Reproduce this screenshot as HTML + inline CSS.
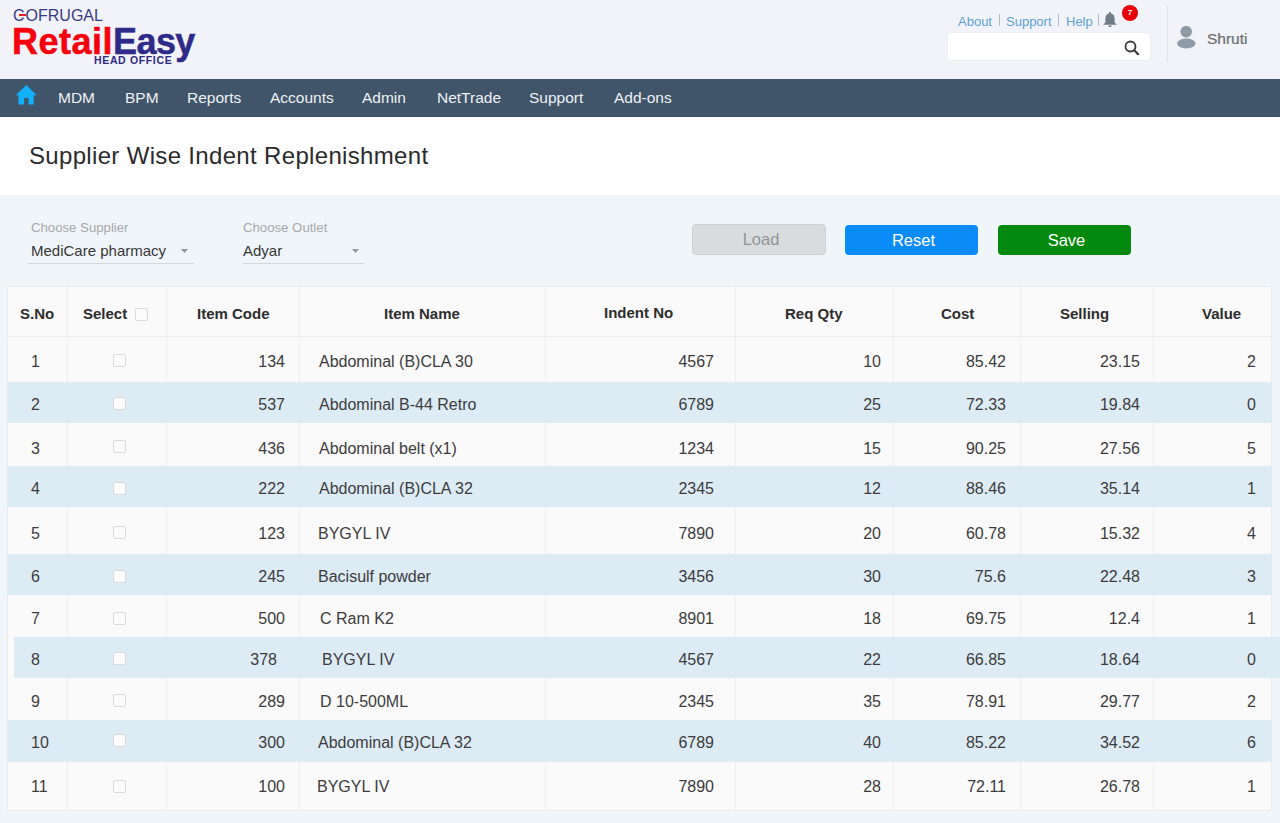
<!DOCTYPE html><html><head><meta charset="utf-8"><style>
*{margin:0;padding:0;box-sizing:border-box}
html,body{width:1280px;height:823px;overflow:hidden;background:#f0f5f9;font-family:"Liberation Sans",sans-serif;position:relative}
.a{position:absolute;white-space:nowrap}
#hdr{position:absolute;left:0;top:0;width:1280px;height:79px;background:#f2f3f8}
#nav{position:absolute;left:0;top:79px;width:1280px;height:38px;background:#40556a}
.nv{position:absolute;top:89px;color:#eef1f4;font-size:15.5px;line-height:18px}
#title{position:absolute;left:0;top:117px;width:1280px;height:78px;background:#fff}
.lbl{color:#a6a8aa;font-size:13.2px;line-height:15px}
.val{color:#373737;font-size:15px;line-height:17px}
.ul{position:absolute;height:1px;background:#d3d7dc}
.btn{position:absolute;top:224px;height:31px;border-radius:4px;text-align:center;line-height:31px;font-size:16.5px;padding-left:4px}
.row{position:absolute;left:7px;width:1264px}
.cell{position:absolute;font-size:16px;line-height:18px;color:#3c3c3c}
.vl{position:absolute;width:1px;background:#eeeeee}
.hl{position:absolute;height:1px;background:#eeeeee}
.cb{position:absolute;width:13px;height:13px;border:1px solid #d9dadb;border-radius:2px;background:#fbfbfb}
.th{position:absolute;top:305px;font-size:15px;line-height:17px;font-weight:bold;color:#2d2d2d}
</style></head><body>
<div id="hdr"></div>
<div class="a" style="left:13px;top:7px;font-size:16px;line-height:18px;color:#363a86;letter-spacing:0px"><span style="margin-right:1px">C</span>OFRUGAL</div>
<div class="a" style="left:19px;top:14px;width:7px;height:2px;background:#e3202e"></div>
<div class="a" style="left:12px;top:21px;font-size:36px;line-height:41px;font-weight:bold;letter-spacing:0px;-webkit-text-stroke:0.5px"><span style="color:#f5000c;letter-spacing:0.5px">Retail</span><span style="color:#2f2a87;letter-spacing:-0.6px">Easy</span></div>
<div class="a" style="left:94px;top:54px;font-size:10.5px;line-height:12px;font-weight:bold;color:#2f2a87;letter-spacing:0.65px">HEAD OFFICE</div>
<div class="a" style="left:958px;top:14px;font-size:13px;line-height:15px;color:#5b9fd6">About</div>
<div class="a" style="left:1006px;top:14px;font-size:13px;line-height:15px;color:#5b9fd6">Support</div>
<div class="a" style="left:1066px;top:14px;font-size:13px;line-height:15px;color:#5b9fd6">Help</div>
<div class="a" style="left:999px;top:14px;width:1px;height:12px;background:#b5b8bc"></div>
<div class="a" style="left:1058px;top:14px;width:1px;height:12px;background:#b5b8bc"></div>
<div class="a" style="left:1098px;top:14px;width:1px;height:12px;background:#b5b8bc"></div>
<svg class="a" style="left:1102px;top:11px" width="16" height="17" viewBox="0 0 16 17"><path d="M8 1c.7 0 1.1.5 1.1 1.1v.3C11.6 3 12.6 5 12.6 7.5v3.2c0 .9.6 1.6 1.9 2.3v.8H1.5v-.8c1.3-.7 1.9-1.4 1.9-2.3V7.5C3.4 5 4.4 3 6.9 2.4v-.3C6.9 1.5 7.3 1 8 1z M6.3 14.4h3.4c0 .9-.8 1.6-1.7 1.6s-1.7-.7-1.7-1.6z" fill="#6f7c88"/></svg>
<div class="a" style="left:1122px;top:5px;width:16px;height:16px;border-radius:50%;background:#e8000b;color:#fff;font-size:8px;font-weight:bold;line-height:15px;text-align:center">7</div>
<div class="a" style="left:947px;top:32px;width:204px;height:29px;background:#fff;border-radius:4px;border:1px solid #eceef2"></div>
<svg class="a" style="left:1124px;top:40px" width="16" height="15" viewBox="0 0 16 15"><circle cx="6.5" cy="6.5" r="5" fill="none" stroke="#3a3a3a" stroke-width="1.8"/><path d="M10.2 10.2l4 4" stroke="#3a3a3a" stroke-width="2.2" stroke-linecap="round"/></svg>
<div class="a" style="left:1167px;top:5px;width:1px;height:57px;background:#e3e5ea"></div>
<svg class="a" style="left:1176px;top:25px" width="21" height="24" viewBox="0 0 21 24"><circle cx="10.2" cy="6.6" r="5.8" fill="#8e9aa5"/><ellipse cx="10.3" cy="18.5" rx="9.2" ry="4.9" fill="#8e9aa5"/></svg>
<div class="a" style="left:1207px;top:30px;font-size:15.5px;line-height:17px;color:#6a6c70;-webkit-text-stroke:0.2px #6a6c70">Shruti</div>
<div id="nav"></div>
<svg class="a" style="left:15px;top:85px" width="23" height="20" viewBox="0 0 23 20"><path d="M11.3 0L0.8 10.2H3.5V19.5H9.1V12.9H13.6V19.5H18.7V10.2H21.8Z" fill="#12b0f8"/></svg>
<div class="a nv" style="left:58px">MDM</div>
<div class="a nv" style="left:125px">BPM</div>
<div class="a nv" style="left:187px">Reports</div>
<div class="a nv" style="left:270px">Accounts</div>
<div class="a nv" style="left:362px">Admin</div>
<div class="a nv" style="left:437px">NetTrade</div>
<div class="a nv" style="left:529px">Support</div>
<div class="a nv" style="left:614px">Add-ons</div>
<div id="title"></div>
<div class="a" style="left:29px;top:143px;font-size:24px;line-height:26px;color:#2b2b2b;letter-spacing:0.33px">Supplier Wise Indent Replenishment</div>
<div class="a lbl" style="left:31px;top:220px">Choose Supplier</div>
<div class="a val" style="left:31px;top:242px">MediCare pharmacy</div>
<div class="ul" style="left:28px;top:263px;width:166px"></div>
<svg class="a" style="left:181px;top:249px" width="7" height="4"><path d="M0 0h7L3.5 4z" fill="#929599"/></svg>
<div class="a lbl" style="left:243px;top:220px">Choose Outlet</div>
<div class="a val" style="left:243px;top:242px">Adyar</div>
<div class="ul" style="left:243px;top:263px;width:121px"></div>
<svg class="a" style="left:352px;top:249px" width="7" height="4"><path d="M0 0h7L3.5 4z" fill="#929599"/></svg>
<div class="btn" style="left:692px;width:134px;background:#d9dcde;border:1px solid #ced1d3;color:#919396;line-height:29px">Load</div>
<div class="btn" style="left:845px;top:225px;height:30px;line-height:31px;width:133px;background:#0b8bf7;color:#fff">Reset</div>
<div class="btn" style="left:998px;top:225px;height:30px;line-height:31px;width:133px;background:#038a0e;color:#fff">Save</div>
<div class="a" style="left:7px;top:286px;width:1265px;height:525px;background:#fafafa;border:1px solid #ebebeb"></div>
<div class="a" style="left:7px;top:382px;width:1265px;height:41px;background:#ddebf5"></div>
<div class="a" style="left:7px;top:466px;width:1265px;height:41px;background:#ddebf5"></div>
<div class="a" style="left:7px;top:554px;width:1265px;height:41px;background:#ddebf5"></div>
<div class="a" style="left:14px;top:637px;width:1266px;height:41px;background:#ddebf5"></div>
<div class="a" style="left:7px;top:720px;width:1265px;height:42px;background:#ddebf5"></div>
<div class="hl" style="left:7px;top:336px;width:1265px"></div>
<div class="vl" style="left:67px;top:287px;height:50px"></div>
<div class="vl" style="left:67px;top:337px;height:45px"></div>
<div class="vl" style="left:67px;top:423px;height:43px"></div>
<div class="vl" style="left:67px;top:507px;height:47px"></div>
<div class="vl" style="left:67px;top:595px;height:42px"></div>
<div class="vl" style="left:67px;top:678px;height:42px"></div>
<div class="vl" style="left:67px;top:762px;height:48px"></div>
<div class="vl" style="left:166px;top:287px;height:50px"></div>
<div class="vl" style="left:166px;top:337px;height:45px"></div>
<div class="vl" style="left:166px;top:423px;height:43px"></div>
<div class="vl" style="left:166px;top:507px;height:47px"></div>
<div class="vl" style="left:166px;top:595px;height:42px"></div>
<div class="vl" style="left:166px;top:678px;height:42px"></div>
<div class="vl" style="left:166px;top:762px;height:48px"></div>
<div class="vl" style="left:299px;top:287px;height:50px"></div>
<div class="vl" style="left:299px;top:337px;height:45px"></div>
<div class="vl" style="left:299px;top:423px;height:43px"></div>
<div class="vl" style="left:299px;top:507px;height:47px"></div>
<div class="vl" style="left:299px;top:595px;height:42px"></div>
<div class="vl" style="left:299px;top:678px;height:42px"></div>
<div class="vl" style="left:299px;top:762px;height:48px"></div>
<div class="vl" style="left:545px;top:287px;height:50px"></div>
<div class="vl" style="left:545px;top:337px;height:45px"></div>
<div class="vl" style="left:545px;top:423px;height:43px"></div>
<div class="vl" style="left:545px;top:507px;height:47px"></div>
<div class="vl" style="left:545px;top:595px;height:42px"></div>
<div class="vl" style="left:545px;top:678px;height:42px"></div>
<div class="vl" style="left:545px;top:762px;height:48px"></div>
<div class="vl" style="left:735px;top:287px;height:50px"></div>
<div class="vl" style="left:735px;top:337px;height:45px"></div>
<div class="vl" style="left:735px;top:423px;height:43px"></div>
<div class="vl" style="left:735px;top:507px;height:47px"></div>
<div class="vl" style="left:735px;top:595px;height:42px"></div>
<div class="vl" style="left:735px;top:678px;height:42px"></div>
<div class="vl" style="left:735px;top:762px;height:48px"></div>
<div class="vl" style="left:893px;top:287px;height:50px"></div>
<div class="vl" style="left:893px;top:337px;height:45px"></div>
<div class="vl" style="left:893px;top:423px;height:43px"></div>
<div class="vl" style="left:893px;top:507px;height:47px"></div>
<div class="vl" style="left:893px;top:595px;height:42px"></div>
<div class="vl" style="left:893px;top:678px;height:42px"></div>
<div class="vl" style="left:893px;top:762px;height:48px"></div>
<div class="vl" style="left:1020px;top:287px;height:50px"></div>
<div class="vl" style="left:1020px;top:337px;height:45px"></div>
<div class="vl" style="left:1020px;top:423px;height:43px"></div>
<div class="vl" style="left:1020px;top:507px;height:47px"></div>
<div class="vl" style="left:1020px;top:595px;height:42px"></div>
<div class="vl" style="left:1020px;top:678px;height:42px"></div>
<div class="vl" style="left:1020px;top:762px;height:48px"></div>
<div class="vl" style="left:1153px;top:287px;height:50px"></div>
<div class="vl" style="left:1153px;top:337px;height:45px"></div>
<div class="vl" style="left:1153px;top:423px;height:43px"></div>
<div class="vl" style="left:1153px;top:507px;height:47px"></div>
<div class="vl" style="left:1153px;top:595px;height:42px"></div>
<div class="vl" style="left:1153px;top:678px;height:42px"></div>
<div class="vl" style="left:1153px;top:762px;height:48px"></div>
<div class="th" style="left:20px;top:305px">S.No</div>
<div class="th" style="left:83px;top:305px">Select</div>
<div class="th" style="left:197px;top:305px">Item Code</div>
<div class="th" style="left:384px;top:305px">Item Name</div>
<div class="th" style="left:604px;top:304px">Indent No</div>
<div class="th" style="left:785px;top:305px">Req Qty</div>
<div class="th" style="left:941px;top:305px">Cost</div>
<div class="th" style="left:1060px;top:305px">Selling</div>
<div class="th" style="left:1202px;top:305px">Value</div>
<div class="cb" style="left:135px;top:308px"></div>
<div class="cell" style="left:31px;top:353px">1</div>
<div class="cb" style="left:113px;top:354px"></div>
<div class="cell" style="right:995px;top:353px">134</div>
<div class="cell" style="left:319px;top:353px">Abdominal (B)CLA 30</div>
<div class="cell" style="right:566px;top:353px">4567</div>
<div class="cell" style="right:399px;top:353px">10</div>
<div class="cell" style="right:274px;top:353px">85.42</div>
<div class="cell" style="right:140px;top:353px">23.15</div>
<div class="cell" style="right:24px;top:353px">2</div>
<div class="cell" style="left:31px;top:396px">2</div>
<div class="cb" style="left:113px;top:397px"></div>
<div class="cell" style="right:995px;top:396px">537</div>
<div class="cell" style="left:319px;top:396px">Abdominal B-44 Retro</div>
<div class="cell" style="right:566px;top:396px">6789</div>
<div class="cell" style="right:399px;top:396px">25</div>
<div class="cell" style="right:274px;top:396px">72.33</div>
<div class="cell" style="right:140px;top:396px">19.84</div>
<div class="cell" style="right:24px;top:396px">0</div>
<div class="cell" style="left:31px;top:440px">3</div>
<div class="cb" style="left:113px;top:440px"></div>
<div class="cell" style="right:995px;top:440px">436</div>
<div class="cell" style="left:319px;top:440px">Abdominal belt (x1)</div>
<div class="cell" style="right:566px;top:440px">1234</div>
<div class="cell" style="right:399px;top:440px">15</div>
<div class="cell" style="right:274px;top:440px">90.25</div>
<div class="cell" style="right:140px;top:440px">27.56</div>
<div class="cell" style="right:24px;top:440px">5</div>
<div class="cell" style="left:31px;top:480px">4</div>
<div class="cb" style="left:113px;top:482px"></div>
<div class="cell" style="right:995px;top:480px">222</div>
<div class="cell" style="left:319px;top:480px">Abdominal (B)CLA 32</div>
<div class="cell" style="right:566px;top:480px">2345</div>
<div class="cell" style="right:399px;top:480px">12</div>
<div class="cell" style="right:274px;top:480px">88.46</div>
<div class="cell" style="right:140px;top:480px">35.14</div>
<div class="cell" style="right:24px;top:480px">1</div>
<div class="cell" style="left:31px;top:525px">5</div>
<div class="cb" style="left:113px;top:526px"></div>
<div class="cell" style="right:995px;top:525px">123</div>
<div class="cell" style="left:318px;top:525px">BYGYL IV</div>
<div class="cell" style="right:566px;top:525px">7890</div>
<div class="cell" style="right:399px;top:525px">20</div>
<div class="cell" style="right:274px;top:525px">60.78</div>
<div class="cell" style="right:140px;top:525px">15.32</div>
<div class="cell" style="right:24px;top:525px">4</div>
<div class="cell" style="left:31px;top:568px">6</div>
<div class="cb" style="left:113px;top:570px"></div>
<div class="cell" style="right:995px;top:568px">245</div>
<div class="cell" style="left:318px;top:568px">Bacisulf powder</div>
<div class="cell" style="right:566px;top:568px">3456</div>
<div class="cell" style="right:399px;top:568px">30</div>
<div class="cell" style="right:274px;top:568px">75.6</div>
<div class="cell" style="right:140px;top:568px">22.48</div>
<div class="cell" style="right:24px;top:568px">3</div>
<div class="cell" style="left:31px;top:610px">7</div>
<div class="cb" style="left:113px;top:612px"></div>
<div class="cell" style="right:995px;top:610px">500</div>
<div class="cell" style="left:320px;top:610px">C Ram K2</div>
<div class="cell" style="right:566px;top:610px">8901</div>
<div class="cell" style="right:399px;top:610px">18</div>
<div class="cell" style="right:274px;top:610px">69.75</div>
<div class="cell" style="right:140px;top:610px">12.4</div>
<div class="cell" style="right:24px;top:610px">1</div>
<div class="cell" style="left:31px;top:651px">8</div>
<div class="cb" style="left:113px;top:652px"></div>
<div class="cell" style="right:1003px;top:651px">378</div>
<div class="cell" style="left:322px;top:651px">BYGYL IV</div>
<div class="cell" style="right:566px;top:651px">4567</div>
<div class="cell" style="right:399px;top:651px">22</div>
<div class="cell" style="right:274px;top:651px">66.85</div>
<div class="cell" style="right:140px;top:651px">18.64</div>
<div class="cell" style="right:24px;top:651px">0</div>
<div class="cell" style="left:31px;top:693px">9</div>
<div class="cb" style="left:113px;top:694px"></div>
<div class="cell" style="right:995px;top:693px">289</div>
<div class="cell" style="left:320px;top:693px">D 10-500ML</div>
<div class="cell" style="right:566px;top:693px">2345</div>
<div class="cell" style="right:399px;top:693px">35</div>
<div class="cell" style="right:274px;top:693px">78.91</div>
<div class="cell" style="right:140px;top:693px">29.77</div>
<div class="cell" style="right:24px;top:693px">2</div>
<div class="cell" style="left:31px;top:734px">10</div>
<div class="cb" style="left:113px;top:734px"></div>
<div class="cell" style="right:995px;top:734px">300</div>
<div class="cell" style="left:318px;top:734px">Abdominal (B)CLA 32</div>
<div class="cell" style="right:566px;top:734px">6789</div>
<div class="cell" style="right:399px;top:734px">40</div>
<div class="cell" style="right:274px;top:734px">85.22</div>
<div class="cell" style="right:140px;top:734px">34.52</div>
<div class="cell" style="right:24px;top:734px">6</div>
<div class="cell" style="left:31px;top:778px">11</div>
<div class="cb" style="left:113px;top:780px"></div>
<div class="cell" style="right:995px;top:778px">100</div>
<div class="cell" style="left:317px;top:778px">BYGYL IV</div>
<div class="cell" style="right:566px;top:778px">7890</div>
<div class="cell" style="right:399px;top:778px">28</div>
<div class="cell" style="right:274px;top:778px">72.11</div>
<div class="cell" style="right:140px;top:778px">26.78</div>
<div class="cell" style="right:24px;top:778px">1</div>
</body></html>
